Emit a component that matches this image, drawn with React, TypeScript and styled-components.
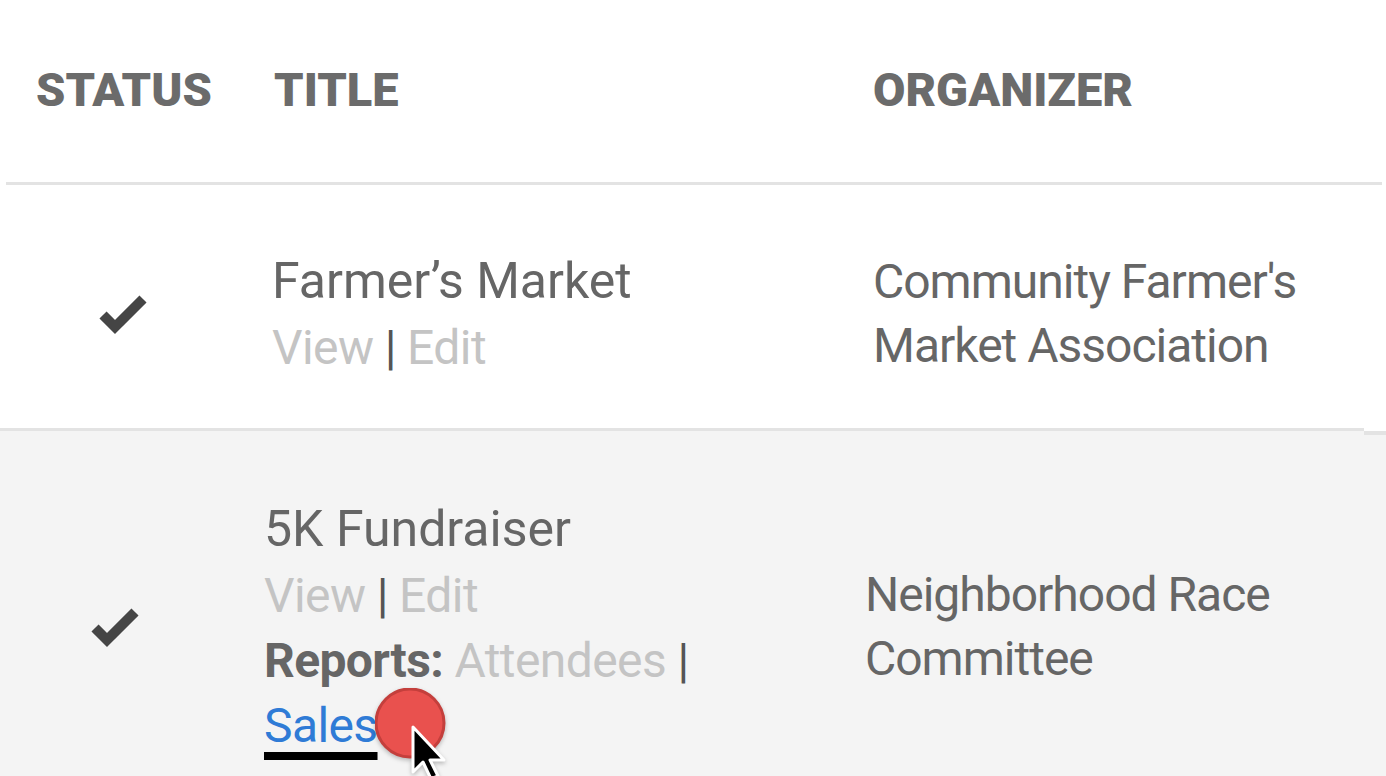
import styled, { createGlobalStyle } from 'styled-components';

const GlobalStyle = createGlobalStyle`
  html, body {
    margin: 0;
    padding: 0;
    background: #ffffff;
    overflow: hidden;
  }
  body {
    font-family: Roboto, "Liberation Sans", sans-serif;
    color: #666666;
  }
`;

const events = [
  {
    title: 'Farmer\u2019s Market',
    organizer: ["Community Farmer's", 'Market Association'],
    reports: false,
    inset: 8,
    padTop: 62,
    padBottom: 48,
  },
  {
    title: '5K Fundraiser',
    organizer: ['Neighborhood Race', 'Committee'],
    reports: true,
    inset: 0,
    padTop: 64,
    padBottom: 56,
  },
];

const CheckIcon = () => (
  <svg width="50" height="42" viewBox="0 0 50 42">
    <path
      d="M5 22 L17 34 L45 6"
      fill="none"
      stroke="#454545"
      strokeWidth="10"
      strokeLinejoin="miter"
    />
  </svg>
);

const ClickMarker = () => (
  <svg width="90" height="100" viewBox="0 0 90 100">
    <circle cx="35" cy="35" r="34" fill="#e9514e" stroke="#c43f3c" strokeWidth="3" />
    <path
      d="M38 39 L38 84 L48 74 L56 91 L63 88 L55 72 L69 72 Z"
      fill="#000000"
      stroke="#ffffff"
      strokeWidth="3"
      strokeLinejoin="round"
    />
  </svg>
);

const App = () => {
  return (
    <>
      <GlobalStyle />
      <Table>
        <HeaderRow>
          <HeadCell>Status</HeadCell>
          <HeadCell>Title</HeadCell>
          <HeadCell>Organizer</HeadCell>
        </HeaderRow>
        {events.map((ev, i) => (
          <Row
            key={ev.title}
            $inset={ev.inset}
            $padTop={ev.padTop}
            $padBottom={ev.padBottom}
            $shaded={i % 2 === 1}
            $divider={i === 0}
          >
            <StatusCell>
              <CheckIcon />
            </StatusCell>
            <TitleCell>
              <EventName>{ev.title}</EventName>
              <Line>
                <MutedLink>View</MutedLink> <Pipe>|</Pipe> <MutedLink>Edit</MutedLink>
              </Line>
              {ev.reports && (
                <Line>
                  <Label>Reports:</Label> <MutedLink>Attendees</MutedLink>{' '}
                  <Pipe>|</Pipe>{' '}
                  <SalesWrap>
                    <ActiveLink>Sales</ActiveLink>
                    <Marker>
                      <ClickMarker />
                    </Marker>
                  </SalesWrap>
                </Line>
              )}
            </TitleCell>
            <OrganizerCell>
              {ev.organizer.map((l) => (
                <div key={l}>{l}</div>
              ))}
            </OrganizerCell>
          </Row>
        ))}
      </Table>
    </>
  );
};

const Table = styled.div`
  display: flex;
  flex-direction: column;
  width: 1386px;
  height: 776px;
  overflow: hidden;
`;

const HeaderRow = styled.div`
  display: grid;
  grid-template-columns: 238px 599px 1fr;
  align-items: center;
  height: 182px;
  margin: 0 4px 0 6px;
  padding-left: 30px;
  border-bottom: 3px solid #e3e3e3;
  flex-shrink: 0;
`;

const HeadCell = styled.div`
  font-family: Roboto, "Liberation Sans", sans-serif;
  font-weight: 900;
  font-size: 47px;
  letter-spacing: 0;
  text-transform: uppercase;
  color: #6b6b6b;
  padding-bottom: 4px;
`;

const Row = styled.div<{
  $inset: number;
  $padTop: number;
  $padBottom: number;
  $shaded: boolean;
  $divider: boolean;
}>`
  position: relative;
  display: grid;
  grid-template-columns: 264px 601px 1fr;
  align-items: center;
  flex-shrink: 0;
  padding: ${(p) => p.$padTop}px 0 ${(p) => p.$padBottom}px ${(p) => p.$inset}px;
  background: ${(p) => (p.$shaded ? '#f4f4f4' : '#ffffff')};
  border-bottom: ${(p) => (p.$divider ? '3px solid #e3e3e3' : 'none')};

  ${(p) =>
    p.$divider &&
    `
    &::after {
      content: '';
      position: absolute;
      right: 0;
      bottom: -7px;
      width: 22px;
      height: 7px;
      background: linear-gradient(to bottom, #ffffff 0 3px, #e3e3e3 3px 7px);
      z-index: 1;
    }
  `}
`;

const StatusCell = styled.div`
  padding-left: 90px;
  display: flex;
  align-items: center;

  svg {
    filter: blur(0.6px);
  }
`;

const TitleCell = styled.div`
  max-width: 450px;
  font-size: 48px;
  line-height: 65px;
  letter-spacing: -0.6px;
`;

const EventName = styled.div`
  color: #666666;
  font-size: 50px;
  line-height: 68px;
  letter-spacing: 0;
`;

const Line = styled.div`
  color: #555555;
`;

const MutedLink = styled.span`
  color: #c4c4c4;
`;

const Pipe = styled.span`
  color: #555555;
`;

const Label = styled.span`
  font-weight: 700;
  color: #666666;
`;

const SalesWrap = styled.span`
  position: relative;
  display: inline-block;
`;

const ActiveLink = styled.span`
  color: #2f7bd6;
  text-decoration: underline;
  text-decoration-color: #000000;
  text-decoration-thickness: 8px;
  text-underline-offset: 10px;
`;

const Marker = styled.span`
  position: absolute;
  left: calc(100% - 3px);
  top: -5px;
  line-height: 0;
  filter: drop-shadow(0 2px 2px rgba(0, 0, 0, 0.25));
`;

const OrganizerCell = styled.div`
  font-size: 48px;
  line-height: 64px;
  letter-spacing: -1px;
  color: #666666;
`;

export default App;
